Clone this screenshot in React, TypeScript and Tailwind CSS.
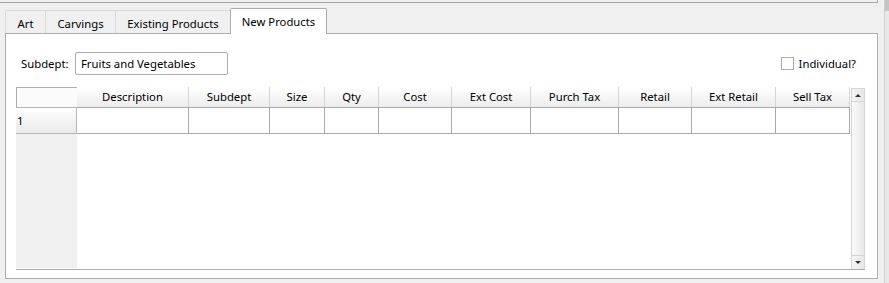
import React from "react";

const cols: { label: string; w: string }[] = [
  { label: "Description", w: "w-[112px]" },
  { label: "Subdept", w: "w-[81px]" },
  { label: "Size", w: "w-[55px]" },
  { label: "Qty", w: "w-[54px]" },
  { label: "Cost", w: "w-[73px]" },
  { label: "Ext Cost", w: "w-[79px]" },
  { label: "Purch Tax", w: "w-[88px]" },
  { label: "Retail", w: "w-[73px]" },
  { label: "Ext Retail", w: "w-[84px]" },
  { label: "Sell Tax", w: "w-[74px]" },
];

export default function App() {
  return (
    <div className="w-[889px] h-[283px] bg-[#f0f0f0] flex text-[11.3px] text-black font-['Noto_Sans',sans-serif] leading-none overflow-hidden">
      <div className="w-[878px] flex flex-col">
        <div className="h-[3px] border-b border-r border-[#a8a8a8]" />
        {/* tabs */}
        <div className="h-[25px] mt-[5px] pl-[5px] flex items-end relative z-10">
          <div className="w-[41px] h-[23px] border border-b-0 border-[#d9d9d9] rounded-t-[2px] flex items-center justify-center bg-[#f0f0f0] pt-[3px]">
            Art
          </div>
          <div className="-ml-px w-[71px] h-[23px] border border-b-0 border-[#d9d9d9] rounded-t-[2px] flex items-center justify-center bg-[#f0f0f0] pt-[3px]">
            Carvings
          </div>
          <div className="-ml-px w-[116px] h-[23px] border border-b-0 border-[#d9d9d9] rounded-t-[2px] flex items-center justify-center bg-[#f0f0f0] pt-[3px]">
            Existing Products
          </div>
          <div className="-ml-px w-[97px] h-[26px] -mb-px border border-b-0 border-[#acacac] rounded-t-[2px] flex items-center justify-center bg-white pt-[1px]">
            New Products
          </div>
        </div>
        {/* panel */}
        <div className="ml-[5px] w-[873px] h-[246px] border border-[#acacac] bg-white flex flex-col">
          <div className="mt-[18px] flex items-center h-[23px]">
            <span className="ml-[15px] w-[54px]">Subdept:</span>
            <div className="w-[153px] h-[23px] border border-[#acacac] rounded-[2px] flex items-center pl-[5px]">
              Fruits and Vegetables
            </div>
            <div className="flex-1" />
            <div className="w-[13px] h-[13px] border border-[#adadad] bg-white" />
            <span className="ml-[5px] mr-[21px]">Individual?</span>
          </div>
          {/* table */}
          <div className="mt-[12px] ml-[10px] w-[849px] h-[183px] flex border-b border-[#adadad]">
            <div className="w-[835px] flex flex-col">
              <div className="flex h-[20px]">
                <div className="w-[61px] border-t border-l border-[#adadad] bg-[#fbfbfb]" />
                {cols.map((c) => (
                  <div
                    key={c.label}
                    className={`${c.w} border-r border-[#d5d5d5] bg-gradient-to-b from-white to-[#ececec] flex items-center justify-center`}
                  >
                    {c.label}
                  </div>
                ))}
              </div>
              <div className="flex h-[27px]">
                <div className="w-[61px] border-t border-b border-r border-[#b5b5b5] bg-gradient-to-b from-white to-[#e9e9e9] flex items-center pl-[1px]">
                  1
                </div>
                {cols.map((c) => (
                  <div key={c.label} className={`${c.w} border-t border-b border-r border-[#a9a9a9] bg-white`} />
                ))}
              </div>
              <div className="flex-1 flex">
                <div className="w-[61px] bg-[#f0f0f0] mb-[1px]" />
                <div className="flex-1 bg-white" />
              </div>
            </div>
            <div className="ml-[1px] mt-[1px] w-[14px] flex flex-col border border-b-0 border-[#d4d4d4] bg-gradient-to-r from-[#fafafa] to-[#e8e8e8]">
              <div className="h-[13px] border-b border-[#d4d4d4] flex items-center justify-center bg-gradient-to-r from-[#f6f6f6] to-[#e6e6e6]">
                <div className="w-0 h-0 border-l-[3px] border-r-[3px] border-b-[3px] border-l-transparent border-r-transparent border-b-[#333]" />
              </div>
              <div className="flex-1" />
              <div className="h-[14px] border-t border-[#d4d4d4] flex items-center justify-center bg-gradient-to-r from-[#f6f6f6] to-[#e6e6e6]">
                <div className="w-0 h-0 border-l-[3px] border-r-[3px] border-t-[3px] border-l-transparent border-r-transparent border-t-[#333]" />
              </div>
            </div>
          </div>
        </div>
      </div>
      <div className="flex-1 flex">
        <div className="ml-[6px] w-[5px] border-l border-[#cfcfcf] bg-[#e8e8e8] flex flex-col">
          <div className="h-[11px] bg-[#c4c4c4]" />
        </div>
      </div>
    </div>
  );
}
